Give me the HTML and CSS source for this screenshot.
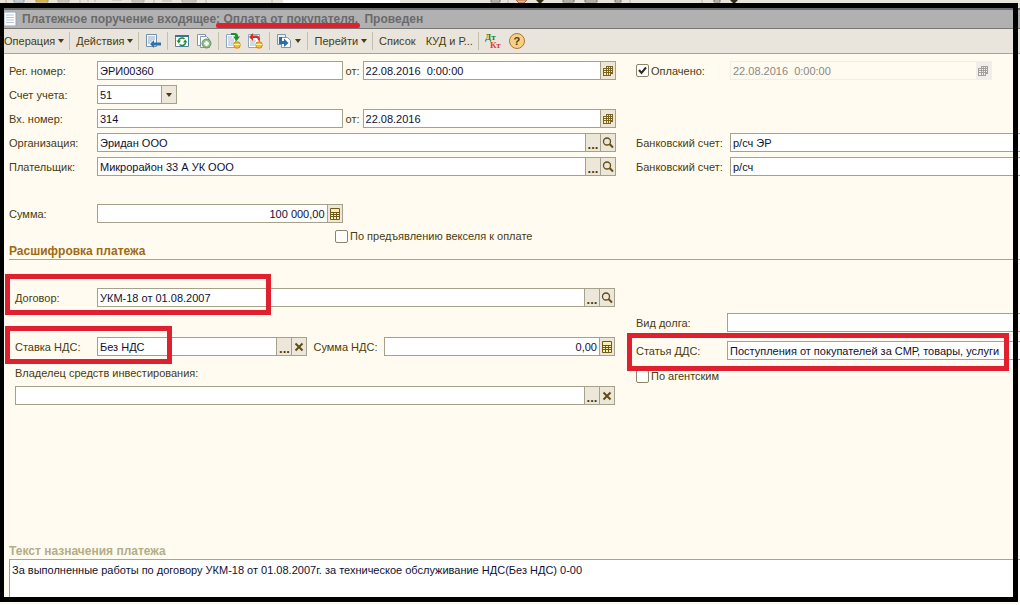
FILE: index.html
```
<!DOCTYPE html>
<html lang="ru">
<head>
<meta charset="utf-8">
<title>Платежное поручение входящее</title>
<link rel="stylesheet" href="styles.css">
</head>
<body>
<svg class="sprite" aria-hidden="true">
  <symbol id="i-cal" viewBox="0 0 12 12"><path d="M4 1h7v8H9v2H1V3h3z" fill="#7a6420"/><path d="M5 2h1v1H5zM7 2h1v1H7zM9 2h1v1H9zM5 4h1v1H5zM7 4h1v1H7zM9 4h1v1H9zM2 4h2v1H2zM2 6h2v1H2zM5 6h1v1H5zM7 6h1v1H7zM9 6h1v1H9zM2 8h2v2H2zM5 8h1v2H5zM7 8h1v2H7z" fill="#f8efb0"/></symbol>
  <symbol id="i-calc" viewBox="0 0 12 12"><rect x="1" y="0" width="10" height="12" rx="1" fill="#6f5a1c"/><path d="M2 1h8v3H2zM2 5h2v1H2zM5 5h2v1H5zM8 5h2v1H8zM2 7h2v1H2zM5 7h2v1H5zM8 7h2v1H8zM2 9h2v2H2zM5 9h2v2H5zM8 9h2v2H8z" fill="#f8efb0"/></symbol>
  <symbol id="i-find" viewBox="0 0 12 12"><circle cx="5" cy="4.500" r="3.500" fill="none" stroke="#5f4d16" stroke-width="1.300"/><path d="M7.500 7l3.500 3.500" stroke="#5f4d16" stroke-width="2"/></symbol>
  <symbol id="i-x" viewBox="0 0 12 12"><path d="M2.500 2.500l7 7M9.500 2.500l-7 7" stroke="#5f4d16" stroke-width="2"/></symbol>
</svg>
<div class="app">
  <div class="strip"><svg width="1020" height="3" aria-hidden="true"><path d="M283 0h117v3H283z" fill="#fff"/><path d="M14 0h10v2H14z" fill="#fff" stroke="#8795a5"/><path d="M36 0h12v2H36z" fill="#f0cf6a" stroke="#b8923a"/><path d="M58 0h11v2H58zM132 0h12v2H132zM182 0h14v2H182z" fill="#dcd8d0" stroke="#b0aca4"/><path d="M88 0v2M95 0v2M112 0h10M162 1h10M6 0v3M80 0v3M154 0v3M206 0v3M272 0v3M508 0v3M630 0v3M702 0v3" stroke="#bdb8ac"/><path d="M491 0h9v2h-9zM563 0h11v2h-11zM585 0h12v2h-12zM615 0h6v2h-6zM714 0h6v2h-6z" fill="#eee" stroke="#77736a"/><path d="M516 0h11l-3 3h-5z" fill="#eeb48a" stroke="#a5704c"/><path d="M536 0h8l-4 4zM730 0h8l-4 4z" fill="#332c18"/></svg></div>
  <header class="title">
    <svg class="doc" viewBox="0 0 14 14"><rect x="1" y="0" width="12" height="14" fill="#fff" stroke="#8fa3b5"/><path d="M3 3h8M3 5.500h8M3 8h8M3 10.500h8" stroke="#b5c6d6"/></svg>
    <h1>Платежное поручение входящее: <span class="marked">Оплата от покупателя.</span> Проведен</h1>
  </header>
  <nav class="toolbar">
    <button class="menu">Операция<i class="arr"></i></button><i class="sep"></i>
    <button class="menu">Действия<i class="arr"></i></button><i class="sep"></i>
    <button class="ico" aria-label="Записать"><svg viewBox="0 0 16 16"><path d="M1.500 1.500h10v12h-10z" fill="#f4f8fc" stroke="#7391ad"/><path d="M3 4h7M3 6h7M3 8h4M3 10h2" stroke="#8fb0cc"/><path d="M5 11l4-4v2.500h7v3H9V15z" fill="#2f73ad"/></svg></button><i class="sep"></i>
    <button class="ico" aria-label="Обновить"><svg viewBox="0 0 16 16"><path d="M1.500 2.500h13v11h-13z" fill="#fff" stroke="#55809f"/><path d="M1 2h14v2H1z" fill="#3f6f9c"/><path d="M4.500 8a3.500 3 0 0 1 6-2M11.500 9.500a3.500 3 0 0 1-6 2" fill="none" stroke="#1c8a35" stroke-width="1.500"/><path d="M2.500 7.500h4.500L4.800 10.500zM9 9.500h4.500L11.200 6.500z" fill="#1c8a35"/></svg></button>
    <button class="ico" aria-label="Скопировать"><svg viewBox="0 0 16 16"><path d="M1.500 1.500h8v11h-8z" fill="#fff" stroke="#8297a8"/><path d="M4.500 3.500h6l3 3v8h-9z" fill="#fff" stroke="#8297a8"/><circle cx="10.500" cy="10.500" r="4.500" fill="#8fbd88" stroke="#5f9659"/><path d="M10.500 8v5M8 10.500h5" stroke="#fff" stroke-width="2"/></svg></button><i class="sep"></i>
    <button class="ico" aria-label="Провести"><svg viewBox="0 0 16 16"><path d="M1.500 1.500h9v13h-9z" fill="#fff" stroke="#8fa6bb"/><path d="M3 4h4M3 6h6M3 8h6M3 10h6M3 12h5" stroke="#9db8cf"/><path d="M6 0h4c2 0 3 1.500 3 3.500h2L11.500 8 8 3.500h2.500C10.500 2.500 10 2 9 2H6z" fill="#1f8f2c"/><rect x="9" y="9" width="6" height="6" rx="2" fill="#f2c12e" stroke="#c08a16"/><path d="M9 11.500h6" stroke="#fff0a0"/></svg></button>
    <button class="ico" aria-label="Отмена проведения"><svg viewBox="0 0 16 16"><path d="M1.500 1.500h11v13h-11z" fill="#fff" stroke="#8fa6bb"/><path d="M3 8h6M3 10h5M3 12h5" stroke="#9db8cf"/><path d="M2 4l4-4v2.500h3c3 0 4 2 4 5h-2c0-2-1-2.500-2-2.500H6V8z" fill="#d63323"/><rect x="9" y="9" width="6" height="6" rx="2" fill="#f2c12e" stroke="#c08a16"/><path d="M9 11.500h6" stroke="#fff0a0"/></svg></button><i class="sep"></i>
    <button class="menu ico" aria-label="Ввести на основании"><svg viewBox="0 0 16 16"><path d="M1.500 1.500h8v10h-8z" fill="#e8f0f7" stroke="#8297a8"/><path d="M5.500 4.500h6l3 3v7h-9z" fill="#fff" stroke="#8297a8"/><path d="M3 4h3v4h2V5.500L12.500 10 8 14v-3H3z" fill="#2b6fa8"/></svg><i class="arr"></i></button><i class="sep"></i>
    <button class="menu">Перейти<i class="arr"></i></button><i class="sep"></i>
    <button class="menu wide">Список</button>
    <button class="menu">КУД и Р...</button><i class="sep"></i>
    <button class="dtkt" aria-label="Дт Кт"><svg viewBox="0 0 16 16"><text class="dt" x="0" y="7">Дт</text><text class="kt" x="5" y="15">Кт</text></svg></button>
    <button class="help" aria-label="Справка">?</button>
  </nav>
  <main>
    <section class="cols">
      <div class="stack">
        <div class="row pair"><label for="reg">Рег. номер:</label><div class="field"><input id="reg" value="ЭРИ00360"></div><label for="regd">от:</label><div class="field"><input id="regd" value="22.08.2016  0:00:00"><button aria-label="Календарь"><svg><use href="#i-cal"/></svg></button></div></div>
        <div class="row"><label for="acc">Счет учета:</label><div class="field account"><input id="acc" value="51"><button aria-label="Выбрать"><i class="arr"></i></button></div></div>
        <div class="row pair"><label for="inn">Вх. номер:</label><div class="field"><input id="inn" value="314"></div><label for="innd">от:</label><div class="field"><input id="innd" value="22.08.2016"><button aria-label="Календарь"><svg><use href="#i-cal"/></svg></button></div></div>
        <div class="row"><label for="org">Организация:</label><div class="field"><input id="org" value="Эридан ООО"><button class="dots">...</button><button aria-label="Открыть"><svg><use href="#i-find"/></svg></button></div></div>
        <div class="row"><label for="pay">Плательщик:</label><div class="field"><input id="pay" value="Микрорайон 33 А УК ООО"><button class="dots">...</button><button aria-label="Открыть"><svg><use href="#i-find"/></svg></button></div></div>
        <div class="row pair total"><label for="sum">Сумма:</label><div class="field"><input id="sum" class="num" value="100 000,00"><button aria-label="Калькулятор"><svg><use href="#i-calc"/></svg></button></div></div>
        <label class="check bill"><input type="checkbox"><span>По предъявлению векселя к оплате</span></label>
      </div>
      <div class="stack right">
        <div class="row paid"><label class="check"><input type="checkbox" checked><span>Оплачено:</span></label><div class="field off"><input aria-label="Дата оплаты" value="22.08.2016  0:00:00" disabled><button disabled aria-label="Календарь"><svg><use href="#i-cal"/></svg></button></div></div>
        <div class="row bank"><label for="b1">Банковский счет:</label><div class="field open"><input id="b1" value="р/сч ЭР"></div></div>
        <div class="row"><label for="b2">Банковский счет:</label><div class="field open"><input id="b2" value="р/сч"></div></div>
      </div>
    </section>
    <h2>Расшифровка платежа</h2>
    <section class="cols details">
      <div class="stack left">
        <div class="row"><label for="dog">Договор:</label><div class="field"><input id="dog" value="УКМ-18 от 01.08.2007"><button class="dots">...</button><button aria-label="Открыть"><svg><use href="#i-find"/></svg></button></div><i class="frame contract"></i></div>
        <div class="row vat"><label for="vat">Ставка НДС:</label><div class="field"><input id="vat" value="Без НДС"><button class="dots">...</button><button aria-label="Очистить"><svg><use href="#i-x"/></svg></button></div><label for="vats">Сумма НДС:</label><div class="field"><input id="vats" class="num" value="0,00"><button aria-label="Калькулятор"><svg><use href="#i-calc"/></svg></button></div><i class="frame rate"></i></div>
        <div class="owner"><label for="own">Владелец средств инвестирования:</label><div class="field"><input id="own"><button class="dots">...</button><button aria-label="Очистить"><svg><use href="#i-x"/></svg></button></div></div>
      </div>
      <div class="stack right">
        <div class="row"><label for="debt">Вид долга:</label><div class="field open"><input id="debt"></div></div>
        <div class="row item"><label for="dds">Статья ДДС:</label><div class="field open"><input id="dds" value="Поступления от покупателей за СМР, товары, услуги"></div><i class="frame flow"></i></div>
        <label class="check agent"><input type="checkbox"><span>По агентским</span></label>
      </div>
    </section>
    <section class="purpose">
      <h2 id="pt">Текст назначения платежа</h2>
      <textarea aria-labelledby="pt">За выполненные работы по договору УКМ-18 от 01.08.2007г. за техническое обслуживание НДС(Без НДС) 0-00</textarea>
    </section>
  </main>
  <div class="outline"></div>
</div>
</body>
</html>
```
FILE: styles.css
```
* { box-sizing: border-box; }
body {
  margin: 0;
  background: #fffbf0;
  color: #4a3c10;
  font: 11px/13px "Liberation Sans", Arial, sans-serif;
}
button, input, textarea { font: inherit; color: inherit; }
button { padding: 0; border: 0; background: none; }
.sprite { position: absolute; width: 0; height: 0; }
.app {
  position: relative;
  display: flex;
  flex-direction: column;
  height: 100vh;
  overflow: hidden;
}
.strip { flex: none; height: 8px; overflow: hidden; background: #e9e4da; }
.strip svg { display: block; }
.outline {
  position: absolute;
  inset: 3px 2px 3px -1px;
  border: 5px solid #000;
  pointer-events: none;
}
.title {
  flex: none;
  display: flex;
  align-items: center;
  gap: 5px;
  height: 21px;
  padding-left: 3px;
  background: #b1b1b1;
  border-top: 2px solid #6e6e6e;
  border-bottom: 1px solid #777;
}
.doc { width: 14px; height: 14px; }
h1 { margin: 0; font-size: 12px; line-height: 15px; color: #6a6a6a; white-space: pre; }
.marked { position: relative; margin-right: 3px; }
.marked::after {
  content: "";
  position: absolute;
  left: -7px;
  right: -2px;
  bottom: -2px;
  height: 5px;
  border-radius: 2px;
  background: #e0202e;
}
.toolbar {
  flex: none;
  display: flex;
  align-items: center;
  height: 25px;
  padding-left: 4px;
  background: #e9e5dc;
  border-bottom: 1px solid #aaa68c;
}
.menu { display: flex; align-items: center; gap: 3px; margin-right: 5px; white-space: nowrap; }
.wide { margin-right: 10px; }
.arr { border: 3px solid transparent; border-top: 4px solid #4a3c10; border-bottom: 0; }
.sep { width: 1px; height: 18px; margin-right: 6px; background: #c5c0ae; }
.ico { margin-right: 6px; }
.ico svg, .dtkt svg { display: block; width: 16px; height: 16px; }
.dtkt { margin-right: 8px; }
.dtkt text { font: bold 9px "Liberation Serif", serif; }
.dt { fill: #1f7f1f; }
.kt { fill: #d8403a; }
.help {
  width: 16px;
  height: 16px;
  border: 1px solid #a87838;
  border-radius: 50%;
  background: #f7cf86;
  font-weight: bold;
}
main {
  flex: 1;
  display: flex;
  flex-direction: column;
  padding: 7px 0 5px 9px;
}
.cols { display: grid; grid-template-columns: 49fr 31fr; column-gap: 20px; }
.stack { display: flex; flex-direction: column; gap: 5px; min-width: 0; }
.row {
  position: relative;
  display: grid;
  grid-template-columns: 88px 1fr;
  align-items: center;
}
.row label { padding-top: 2px; }
.row .check { padding-top: 0; }
.pair { grid-template-columns: 88px 62fr 20px 64fr; }
.pair label + .field + label { padding-left: 3px; }
.field {
  display: flex;
  height: 19px;
  min-width: 0;
  border: 1px solid #a5a18a;
  background: #fff;
}
.field input {
  flex: 1;
  min-width: 0;
  padding: 2px 2px 0;
  border: 0;
  background: none;
  color: #101030;
}
.field .num { text-align: right; }
.field button {
  flex: none;
  display: flex;
  align-items: center;
  justify-content: center;
  width: 15px;
  border-left: 1px solid #a5a18a;
  background: #ede7da;
  font-weight: bold;
}
.field .dots { align-items: flex-end; font-size: 13px; }
.field svg { width: 12px; height: 12px; }
.account { width: 80px; }
.open { border-right: 0; }
.total { margin-top: 23px; }
.check { display: flex; align-items: center; gap: 2px; }
.check span { padding-top: 1px; }
.check input {
  appearance: none;
  width: 13px;
  height: 13px;
  margin: 0;
  border: 1px solid #8a8468;
  border-radius: 2px;
  background: #fff;
}
.check input:checked {
  background: #fff url("data:image/svg+xml,%3Csvg xmlns='http://www.w3.org/2000/svg' viewBox='0 0 11 11'%3E%3Cpath d='M2 5l2.500 3L9 2.500' fill='none' stroke='%23302c28' stroke-width='2'/%3E%3C/svg%3E");
}
.bill { align-self: flex-start; margin: 1px 0 0 326px; }
.right .row { grid-template-columns: 94px 1fr; }
.right .paid { padding-right: 28px; }
.off { border-color: #f3eedd; background: #fffbf0; }
.field.off input { color: #8b8880; }
.off button { border: 0; filter: grayscale(1); opacity: .6; }
.bank { margin-top: 48px; }
h2 {
  margin: 1px 0 0;
  padding-bottom: 0;
  border-bottom: 1px solid #aaa68c;
  color: #a06a10;
  font-size: 12px;
  line-height: 15px;
}
.details { margin-top: 28px; }
.left { padding: 0 1px 0 6px; gap: 30px; }
.left .row { grid-template-columns: 82px 1fr; }
.left .vat { grid-template-columns: 82px 21fr 77px 23fr; }
.vat label + .field + label { padding-left: 6px; }
.owner { display: grid; gap: 6px; margin-top: -19px; }
.details .right { padding-top: 25px; gap: 9px; }
.details .right .row { grid-template-columns: 91px 1fr; }
.agent { align-self: flex-start; }
.frame { position: absolute; border: 5px solid #e0202e; pointer-events: none; z-index: 1; }
.contract { inset: -14px auto -8px -10px; width: 266px; }
.rate { inset: -11px auto -8px -10px; width: 167px; }
.flow { inset: -8px 11px -11px -9px; }
.purpose { margin-top: auto; }
.purpose h2 { color: #b3ae88; }
textarea {
  display: block;
  width: 100%;
  height: 40px;
  padding: 4px 2px;
  border: 0;
  border-left: 1px solid #a5a18a;
  background: #fff;
  color: #101030;
  resize: none;
}
```
